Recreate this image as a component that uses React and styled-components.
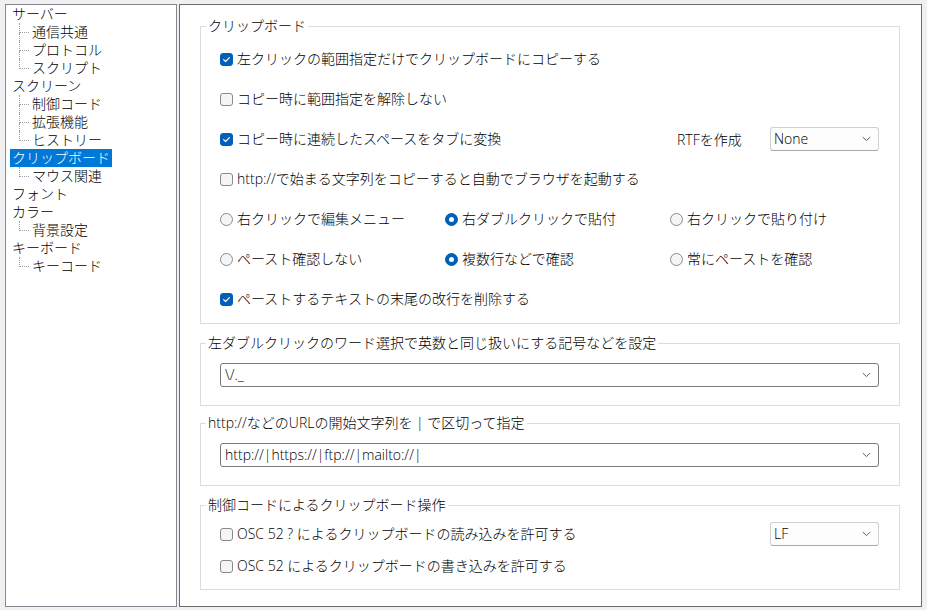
import React from "react";
import styled, { createGlobalStyle } from "styled-components";

const Global = createGlobalStyle`
  html, body { margin: 0; padding: 0; background: #f0f0f0; }
  body {
    font-family: "Open Sans", "Noto Sans CJK JP", sans-serif;
    font-size: 14px;
    font-weight: 300;
    color: #000;
  }
  * { box-sizing: border-box; }
`;

const Window = styled.div`
  display: flex;
  gap: 2px;
  padding: 4px 5px 3px 5px;
  height: 610px;
  width: 927px;
`;

const TreePanel = styled.div`
  width: 172px;
  flex: none;
  background: #fff;
  border: 1px solid #828790;
  padding: 0 0 0 4px;
  display: flex;
  flex-direction: column;
`;

const TreeRow = styled.div`
  display: flex;
  align-items: center;
  height: 18px;
`;

const TreeLabel = styled.span`
  display: inline-block;
  height: 18px;
  line-height: 18px;
  padding: 0 2px;
  white-space: nowrap;
  background: ${(p) => (p.$selected ? "#0078d7" : "transparent")};
  color: ${(p) => (p.$selected ? "#fff" : "#000")};
`;

const Connector = styled.span`
  width: 20px;
  height: 18px;
  flex: none;
  display: flex;
  flex-direction: column;
`;

const ConnTop = styled.span`
  display: block;
  margin-left: 9px;
  width: 10px;
  height: 10px;
  border-left: 1px dotted #a0a0a0;
  border-bottom: 1px dotted #a0a0a0;
`;

const ConnBottom = styled.span`
  display: block;
  margin-left: 9px;
  height: 8px;
  border-left: ${(p) => (p.$last ? "none" : "1px dotted #a0a0a0")};
`;

const MainPanel = styled.div`
  flex: none;
  width: 743px;
  background: #fff;
  border: 1px solid #6b6b6b;
  padding: 12px 21px 0 20px;
  display: flex;
  flex-direction: column;
`;

const Group = styled.fieldset`
  margin: ${(p) => p.$mt || 0}px 0 0 0;
  padding: 0;
  border: 1px solid #dcdcdc;
  min-width: 0;
`;

const Legend = styled.legend`
  margin-left: 5px;
  padding: 0 2px;
  line-height: 18px;
  height: 18px;
  font-size: 14px;
  white-space: nowrap;
`;

const GroupBody = styled.div`
  padding: ${(p) => p.$pad};
  display: flex;
  flex-direction: column;
`;

const Row = styled.div`
  display: flex;
  align-items: center;
  height: ${(p) => p.$h || 40}px;
`;

const RadioGrid = styled.div`
  display: grid;
  grid-template-columns: 225px 225px 1fr;
  align-items: center;
  height: 40px;
`;

const Item = styled.label`
  display: flex;
  align-items: center;
  gap: 4px;
  white-space: nowrap;
  line-height: 18px;
  flex: ${(p) => (p.$grow ? 1 : "none")};
`;

const Box = styled.span`
  width: 13px;
  height: 13px;
  flex: none;
  border-radius: 3px;
  display: flex;
  align-items: center;
  justify-content: center;
  background: ${(p) => (p.$checked ? "#005fb8" : "#f5f5f5")};
  border: 1px solid ${(p) => (p.$checked ? "#005fb8" : "#8a8a8a")};
`;

const Radio = styled.span`
  width: 13px;
  height: 13px;
  flex: none;
  border-radius: 50%;
  display: flex;
  align-items: center;
  justify-content: center;
  background: ${(p) => (p.$checked ? "#005fb8" : "#f5f5f5")};
  border: 1px solid ${(p) => (p.$checked ? "#005fb8" : "#8a8a8a")};
`;

const Dot = styled.span`
  width: 5px;
  height: 5px;
  border-radius: 50%;
  background: #fff;
`;

const SideLabel = styled.span`
  width: 93px;
  flex: none;
  white-space: nowrap;
`;

const Select = styled.div`
  width: 109px;
  height: 24px;
  flex: none;
  display: flex;
  align-items: center;
  justify-content: space-between;
  padding: 0 7px 0 3px;
  border: 1px solid #d0d0d0;
  border-bottom-color: #a8a8a8;
  border-radius: 3px;
  background: #fdfdfd;
  line-height: 18px;
`;

const Combo = styled.div`
  height: 24px;
  display: flex;
  align-items: center;
  justify-content: space-between;
  padding: 0 7px 0 4px;
  border: 1px solid #7a7a7a;
  border-radius: 3px;
  background: #fff;
  line-height: 18px;
  white-space: pre;
`;

const Check = () => (
  <svg width="9" height="9" viewBox="0 0 9 9">
    <path d="M1.6 4.6 L3.6 6.5 L7.4 2.6" fill="none" stroke="#fff" strokeWidth="1.2" strokeLinecap="round" strokeLinejoin="round" />
  </svg>
);

const Chevron = () => (
  <svg width="9" height="6" viewBox="0 0 9 6">
    <path d="M0.8 1 L4.5 4.6 L8.2 1" fill="none" stroke="#606060" strokeWidth="1" />
  </svg>
);

const CheckItem = ({ checked, children, grow }) => (
  <Item $grow={grow}>
    <Box $checked={checked}>{checked && <Check />}</Box>
    <span>{children}</span>
  </Item>
);

const RadioItem = ({ checked, children }) => (
  <Item>
    <Radio $checked={checked}>{checked && <Dot />}</Radio>
    <span>{children}</span>
  </Item>
);

const tree = [
  { label: "サーバー", level: 0 },
  { label: "通信共通", level: 1 },
  { label: "プロトコル", level: 1 },
  { label: "スクリプト", level: 1, last: true },
  { label: "スクリーン", level: 0 },
  { label: "制御コード", level: 1 },
  { label: "拡張機能", level: 1 },
  { label: "ヒストリー", level: 1, last: true },
  { label: "クリップボード", level: 0, selected: true },
  { label: "マウス関連", level: 1, last: true },
  { label: "フォント", level: 0 },
  { label: "カラー", level: 0 },
  { label: "背景設定", level: 1, last: true },
  { label: "キーボード", level: 0 },
  { label: "キーコード", level: 1, last: true },
];

export default function App() {
  return (
    <>
      <Global />
      <Window>
        <TreePanel>
          {tree.map((t) => (
            <TreeRow key={t.label}>
              {t.level === 1 && (
                <Connector>
                  <ConnTop />
                  <ConnBottom $last={t.last} />
                </Connector>
              )}
              <TreeLabel $selected={t.selected}>{t.label}</TreeLabel>
            </TreeRow>
          ))}
        </TreePanel>
        <MainPanel>
          <Group>
            <Legend>クリップボード</Legend>
            <GroupBody $pad="4px 20px 4px 19px">
              <Row>
                <CheckItem checked>左クリックの範囲指定だけでクリップボードにコピーする</CheckItem>
              </Row>
              <Row>
                <CheckItem>コピー時に範囲指定を解除しない</CheckItem>
              </Row>
              <Row>
                <CheckItem checked grow>コピー時に連続したスペースをタブに変換</CheckItem>
                <SideLabel>RTFを作成</SideLabel>
                <Select>
                  <span>None</span>
                  <Chevron />
                </Select>
              </Row>
              <Row>
                <CheckItem>http://で始まる文字列をコピーすると自動でブラウザを起動する</CheckItem>
              </Row>
              <RadioGrid>
                <RadioItem>右クリックで編集メニュー</RadioItem>
                <RadioItem checked>右ダブルクリックで貼付</RadioItem>
                <RadioItem>右クリックで貼り付け</RadioItem>
              </RadioGrid>
              <RadioGrid>
                <RadioItem>ペースト確認しない</RadioItem>
                <RadioItem checked>複数行などで確認</RadioItem>
                <RadioItem>常にペーストを確認</RadioItem>
              </RadioGrid>
              <Row>
                <CheckItem checked>ペーストするテキストの末尾の改行を削除する</CheckItem>
              </Row>
            </GroupBody>
          </Group>

          <Group $mt={10}>
            <Legend>左ダブルクリックのワード選択で英数と同じ扱いにする記号などを設定</Legend>
            <GroupBody $pad="11px 20px 18px 19px">
              <Combo>
                <span>{"\\/._"}</span>
                <Chevron />
              </Combo>
            </GroupBody>
          </Group>

          <Group $mt={8}>
            <Legend>http://などのURLの開始文字列を | で区切って指定</Legend>
            <GroupBody $pad="11px 20px 18px 19px">
              <Combo>
                <span>http://|https://|ftp://|mailto://|</span>
                <Chevron />
              </Combo>
            </GroupBody>
          </Group>

          <Group $mt={10}>
            <Legend>制御コードによるクリップボード操作</Legend>
            <GroupBody $pad="4px 20px 7px 19px">
              <Row $h={32}>
                <CheckItem grow>OSC 52 ? によるクリップボードの読み込みを許可する</CheckItem>
                <Select>
                  <span>LF</span>
                  <Chevron />
                </Select>
              </Row>
              <Row $h={32}>
                <CheckItem>OSC 52 によるクリップボードの書き込みを許可する</CheckItem>
              </Row>
            </GroupBody>
          </Group>
        </MainPanel>
      </Window>
    </>
  );
}
